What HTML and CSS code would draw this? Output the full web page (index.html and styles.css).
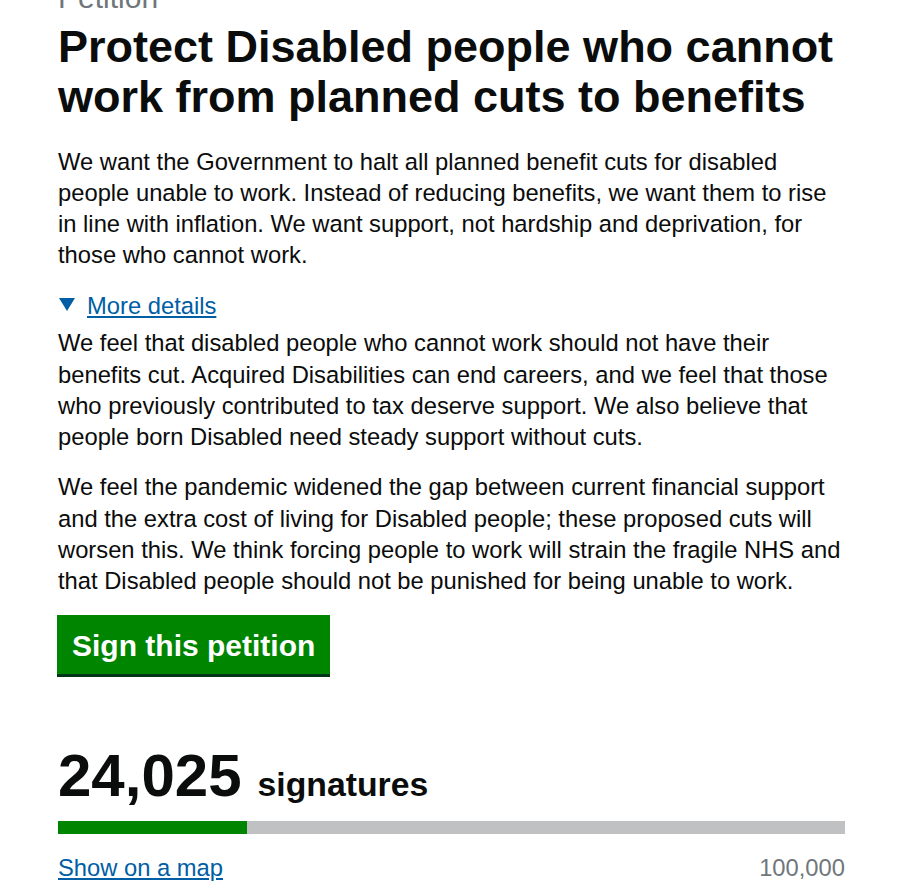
FILE: index.html
```html
<!DOCTYPE html>
<html lang="en">
<head>
<meta charset="utf-8">
<title>Petition</title>
<link rel="stylesheet" href="styles.css">
</head>
<body>
<main class="page">
  <span class="caption">Petition</span>
  <h1 class="title">Protect Disabled people who cannot work from planned cuts to benefits</h1>
  <p class="body">We want the Government to halt all planned benefit cuts for disabled people unable to work. Instead of reducing benefits, we want them to rise in line with inflation. We want support, not hardship and deprivation, for those who cannot work.</p>
  <details class="details" open>
    <summary class="summary"><svg class="arrow" width="16" height="13" viewBox="0 0 16 13" aria-hidden="true"><polygon points="0,0 16,0 8,13" fill="#005ea5"/></svg><span class="summary-link">More details</span></summary>
    <p class="body">We feel that disabled people who cannot work should not have their benefits cut. Acquired Disabilities can end careers, and we feel that those who previously contributed to tax deserve support. We also believe that people born Disabled need steady support without cuts.</p>
    <p class="body">We feel the pandemic widened the gap between current financial support and the extra cost of living for Disabled people; these proposed cuts will worsen this. We think forcing people to work will strain the fragile NHS and that Disabled people should not be punished for being unable to work.</p>
  </details>
  <a class="button" href="#">Sign this petition</a>
  <div class="count"><span class="count-num">24,025</span><span class="count-label">signatures</span></div>
  <div class="bar"><div class="bar-fill" style="width:24.025%"></div></div>
  <div class="foot">
    <a class="link" href="#">Show on a map</a>
    <span class="target">100,000</span>
  </div>
</main>
</body>
</html>
```

FILE: styles.css
```css
html, body { margin: 0; padding: 0; background: #fff; }
body {
  font-family: "Liberation Sans", Arial, sans-serif;
  color: #0b0c0c;
}
.page {
  width: 787px;
  margin-left: 58px;
  margin-top: -21px;
}
.caption {
  display: block;
  font-size: 30px;
  line-height: 37.5px;
  color: #6f777b;
}
.title {
  font-size: 45px;
  line-height: 50px;
  font-weight: 700;
  margin: 5px 0 24px;
}
.body {
  font-size: 23.75px;
  line-height: 31.25px;
  margin: 0 0 19px;
}
.details { margin: 0; }
.summary {
  list-style: none;
  display: flex;
  align-items: flex-start;
  gap: 12px;
  font-size: 23.75px;
  line-height: 31.25px;
  margin-bottom: 6.5px;
  cursor: pointer;
}
.summary::-webkit-details-marker { display: none; }
.arrow {
  flex: none;
  margin: 8px 0 0 1px;
}
.summary-link {
  color: #005ea5;
  text-decoration: underline;
}
.button {
  display: block;
  width: max-content;
  background: #008500;
  color: #fff;
  font-weight: 700;
  font-size: 30px;
  line-height: 35px;
  text-decoration: none;
  padding: 13px 15px 11px 15px;
  box-shadow: 0 3px 0 #003618;
  margin: 1px 0 0 -1px;
}
.count {
  margin-top: 69px;
  display: flex;
  align-items: baseline;
  gap: 16px;
}
.count-num { font-size: 60px; line-height: 66px; font-weight: 700; }
.count-label { font-size: 33.75px; font-weight: 700; }
.bar {
  height: 13px;
  background: #bfc1c3;
  margin-top: 12px;
}
.bar-fill { height: 100%; background: #008500; }
.foot {
  display: flex;
  justify-content: space-between;
  align-items: baseline;
  margin-top: 18px;
  font-size: 23.75px;
  line-height: 31.25px;
}
.link { color: #005ea5; text-decoration: underline; }
.target { color: #6f777b; }
```
